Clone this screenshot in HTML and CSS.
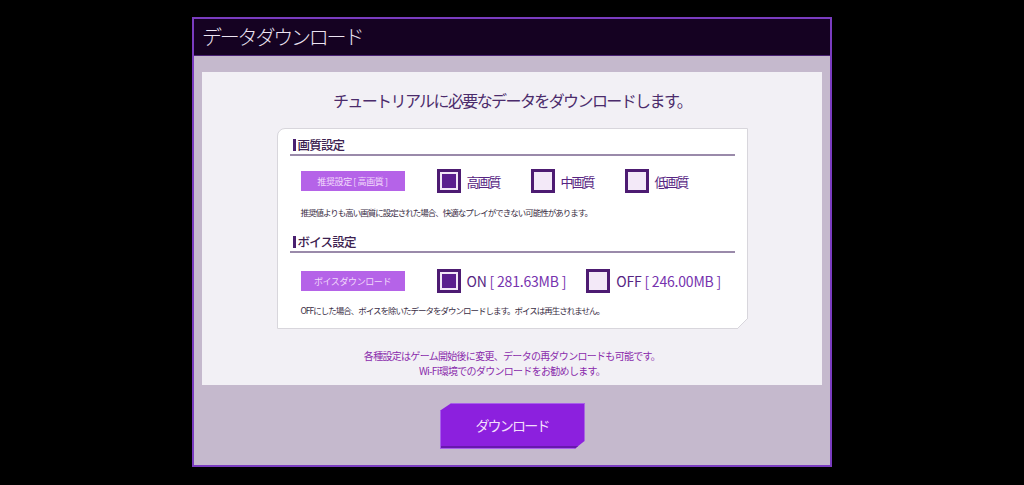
FILE: index.html
```html
<!DOCTYPE html>
<html lang="ja">
<head>
    <meta charset="UTF-8">
    <meta name="viewport" content="width=device-width, initial-scale=1.0">
    <title>データダウンロード</title>
    <link rel="stylesheet" href="styles.css">
</head>
<body>
    <div class="dialog">
        <div class="dialog-header">データダウンロード</div>

        <div class="dialog-body">
            <div class="panel">
                <p class="lead">チュートリアルに必要なデータをダウンロードします。</p>

                <div class="card">
                    <!-- Quality -->
                    <div class="section-head">画質設定</div>
                    <div class="option-row">
                        <span class="badge">推奨設定 [ 高画質 ]</span>
                        <div class="options">
                            <label class="option">
                                <span class="box checked"></span>
                                <span class="option-label jp">高画質</span>
                            </label>
                            <label class="option">
                                <span class="box"></span>
                                <span class="option-label jp">中画質</span>
                            </label>
                            <label class="option">
                                <span class="box"></span>
                                <span class="option-label jp">低画質</span>
                            </label>
                        </div>
                    </div>
                    <p class="note">推奨値よりも高い画質に設定された場合、快適なプレイができない可能性があります。</p>

                    <!-- Voice -->
                    <div class="section-head voice-head">ボイス設定</div>
                    <div class="option-row voice-row">
                        <span class="badge">ボイスダウンロード</span>
                        <div class="options voice-options">
                            <label class="option">
                                <span class="box checked"></span>
                                <span class="option-label">ON <span class="size">[ 281.63MB ]</span></span>
                            </label>
                            <label class="option">
                                <span class="box"></span>
                                <span class="option-label">OFF <span class="size">[ 246.00MB ]</span></span>
                            </label>
                        </div>
                    </div>
                    <p class="note voice-note">OFFにした場合、ボイスを除いたデータをダウンロードします。ボイスは再生されません。</p>
                </div>

                <p class="footnote">各種設定はゲーム開始後に変更、データの再ダウンロードも可能です。<br>Wi-Fi環境でのダウンロードをお勧めします。</p>
            </div>

            <div class="actions">
                <button class="download-button">ダウンロード</button>
            </div>
        </div>
    </div>
</body>
</html>
```

FILE: styles.css
```css
html, body {
    margin: 0;
    background-color: #000;
}

body {
    font-family: "Noto Sans CJK JP", "Noto Sans", sans-serif;
    width: 1024px;
    height: 485px;
    overflow: hidden;
}

p {
    margin: 0;
}

.dialog {
    margin: 17px 0 0 192px;
    width: 640px;
    height: 450px;
    box-sizing: border-box;
    border: 2px solid #7a3cc0;
    background-color: #c5b9cd;
    display: flex;
    flex-direction: column;
}

.dialog-header {
    height: 36px;
    line-height: 36px;
    padding-left: 8px;
    background-color: #150222;
    border-bottom: 1px solid #4a2272;
    color: #ece4f2;
    font-size: 20px;
    letter-spacing: -2.2px;
    font-weight: 300;
}

.dialog-body {
    flex: 1;
    padding: 16px 8px 0;
    display: flex;
    flex-direction: column;
}

.panel {
    height: 313px;
    box-sizing: border-box;
    padding: 18px 0 0;
    background-color: #f2f0f5;
    text-align: center;
}

.lead {
    font-size: 16px;
    line-height: 20px;
    letter-spacing: -1.6px;
    color: #4b2b6b;
}

/* Settings card */
.card {
    position: relative;
    width: 471px;
    height: 201px;
    box-sizing: border-box;
    margin: 18px auto 0;
    padding: 7px 12px 0;
    background-color: #fff;
    border: 1px solid #d8d6dc;
    border-top-left-radius: 8px;
    text-align: left;
}

.card::after {
    content: "";
    position: absolute;
    right: -1px;
    bottom: -1px;
    width: 11px;
    height: 11px;
    background: linear-gradient(to top left, #f2f0f5 calc(50% - 0.5px), #d8d6dc calc(50% - 0.5px), #d8d6dc calc(50% + 0.7px), transparent calc(50% + 0.7px));
}

.section-head {
    height: 18px;
    line-height: 18px;
    padding-left: 3px;
    border-bottom: 2px solid #9a8aaa;
    font-size: 12.5px;
    font-weight: 500;
    letter-spacing: -0.8px;
    color: #3c2150;
    display: flex;
    align-items: center;
}

.section-head::before {
    content: "";
    width: 3px;
    height: 12px;
    margin-right: 2px;
    background-color: #4a2070;
}

.voice-head {
    margin-top: 15px;
}

.option-row {
    margin-top: 13px;
    height: 24px;
    padding-left: 11px;
    display: flex;
    align-items: center;
}

.voice-row {
    margin-top: 16px;
}

.badge {
    width: 104px;
    height: 20px;
    background-color: #b563e8;
    color: #f1d9fb;
    font-size: 9px;
    letter-spacing: -0.4px;
    display: flex;
    align-items: center;
    justify-content: center;
}

.options {
    display: flex;
    align-items: center;
    gap: 31px;
    margin-left: 32px;
}

.voice-options {
    gap: 20px;
}

.option {
    display: flex;
    align-items: center;
    gap: 6px;
}

.box {
    width: 24px;
    height: 24px;
    box-sizing: border-box;
    border: 3px solid #4d1b72;
    background-color: #f3e9f8;
}

.box.checked {
    background-color: #5b1f8e;
    box-shadow: inset 0 0 0 2px #f3e9f8;
}

.option-label {
    font-size: 14px;
    letter-spacing: -0.2px;
    color: #562482;
    white-space: nowrap;
}

.option-label.jp {
    font-size: 13px;
    letter-spacing: -2px;
}

.size {
    color: #7632ae;
}

.note {
    margin-top: 13px;
    padding-left: 11px;
    font-size: 8.5px;
    line-height: 12px;
    letter-spacing: -1px;
    color: #3a2e45;
}

.voice-note {
    margin-top: 11px;
}

.footnote {
    margin-top: 19px;
    font-size: 10px;
    line-height: 15px;
    letter-spacing: -0.7px;
    color: #8a2cac;
}

/* Download button */
.actions {
    padding-top: 18px;
    display: flex;
    justify-content: center;
}

.download-button {
    width: 145px;
    height: 46px;
    border: none;
    padding: 0 0 3px;
    background-color: #8c20de;
    box-shadow: inset 0 0 0 1px #a860ea, inset 0 -3px 0 #6818ae;
    clip-path: polygon(12px 0, 100% 0, 100% calc(100% - 8px), calc(100% - 10px) 100%, 0 100%, 0 8px);
    color: #f2defc;
    font-family: inherit;
    font-size: 14px;
    letter-spacing: -1.8px;
    cursor: pointer;
}

.download-button:hover {
    background-color: #9a34e8;
}
```
